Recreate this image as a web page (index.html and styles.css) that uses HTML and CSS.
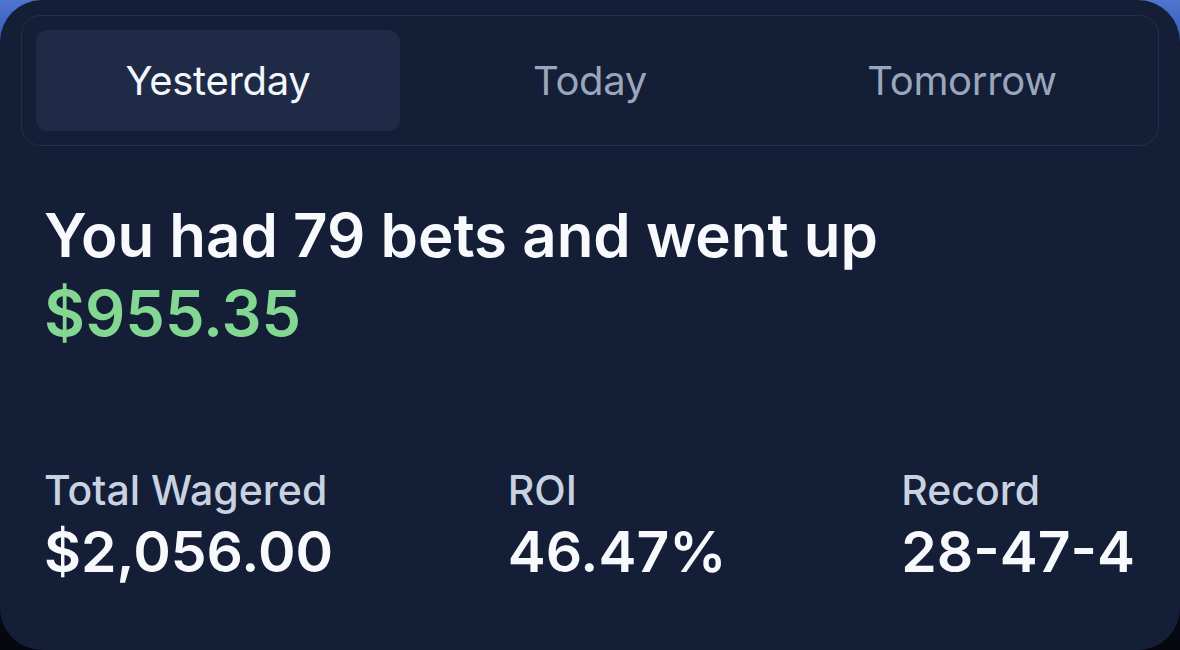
FILE: index.html
```html
<!DOCTYPE html>
<html lang="en">
<head>
<meta charset="utf-8">
<title>Bets summary</title>
<link rel="stylesheet" href="styles.css">
</head>
<body>
<div class="card">
  <div class="tabs">
    <div class="tab active">Yesterday</div>
    <div class="tab">Today</div>
    <div class="tab">Tomorrow</div>
  </div>
  <div class="summary">
    <h1 class="headline">You had 79 bets and went up</h1>
    <div class="amount">$955.35</div>
  </div>
  <div class="stats">
    <div class="stat">
      <div class="label">Total Wagered</div>
      <div class="value">$2,056.00</div>
    </div>
    <div class="stat">
      <div class="label">ROI</div>
      <div class="value">46.47%</div>
    </div>
    <div class="stat">
      <div class="label">Record</div>
      <div class="value">28-47-4</div>
    </div>
  </div>
</div>
</body>
</html>
```

FILE: styles.css
```css
html, body {
  margin: 0;
  padding: 0;
  width: 1180px;
  height: 650px;
  overflow: hidden;
}
body {
  background: linear-gradient(180deg, #4f76cf 0%, #2a55b8 8%, #0b1020 85%, #05070d 100%);
  font-family: Inter, "Noto Sans", sans-serif;
}
.card {
  box-sizing: border-box;
  width: 1180px;
  height: 650px;
  background: #141e36;
  border-radius: 42px;
  padding: 15px 21px 0 21px;
  display: flex;
  flex-direction: column;
}
.tabs {
  box-sizing: border-box;
  height: 131px;
  border: 1.5px solid #242f49;
  border-radius: 20px;
  padding: 14px 14px;
  display: grid;
  grid-template-columns: 1fr 1fr 1fr;
  gap: 8px;
}
.tab {
  display: flex;
  align-items: center;
  justify-content: center;
  border-radius: 12px;
  font-size: 40px;
  color: #9aa6bb;
  letter-spacing: -0.3px;
}
.tab.active {
  background: #1f2b46;
  color: #f3f6fb;
}
.summary {
  padding: 0 23px;
  margin-top: 54px;
}
.headline {
  margin: 0;
  font-size: 60px;
  font-weight: 600;
  line-height: 70px;
  color: #f7f9fc;
  letter-spacing: 0;
}
.amount {
  margin-top: 7px;
  font-size: 63px;
  font-weight: 600;
  line-height: 72px;
  color: #83d792;
  letter-spacing: 0;
}
.stats {
  display: flex;
  justify-content: space-between;
  padding: 0 24px 0 23px;
  margin-top: 114px;
}
.label {
  font-size: 41px;
  font-weight: 500;
  color: #c9d2e1;
  line-height: 54px;
  letter-spacing: 0;
}
.value {
  margin-top: 2px;
  font-size: 57px;
  font-weight: 600;
  color: #f7f9fc;
  line-height: 66px;
  letter-spacing: 0;
}
```
